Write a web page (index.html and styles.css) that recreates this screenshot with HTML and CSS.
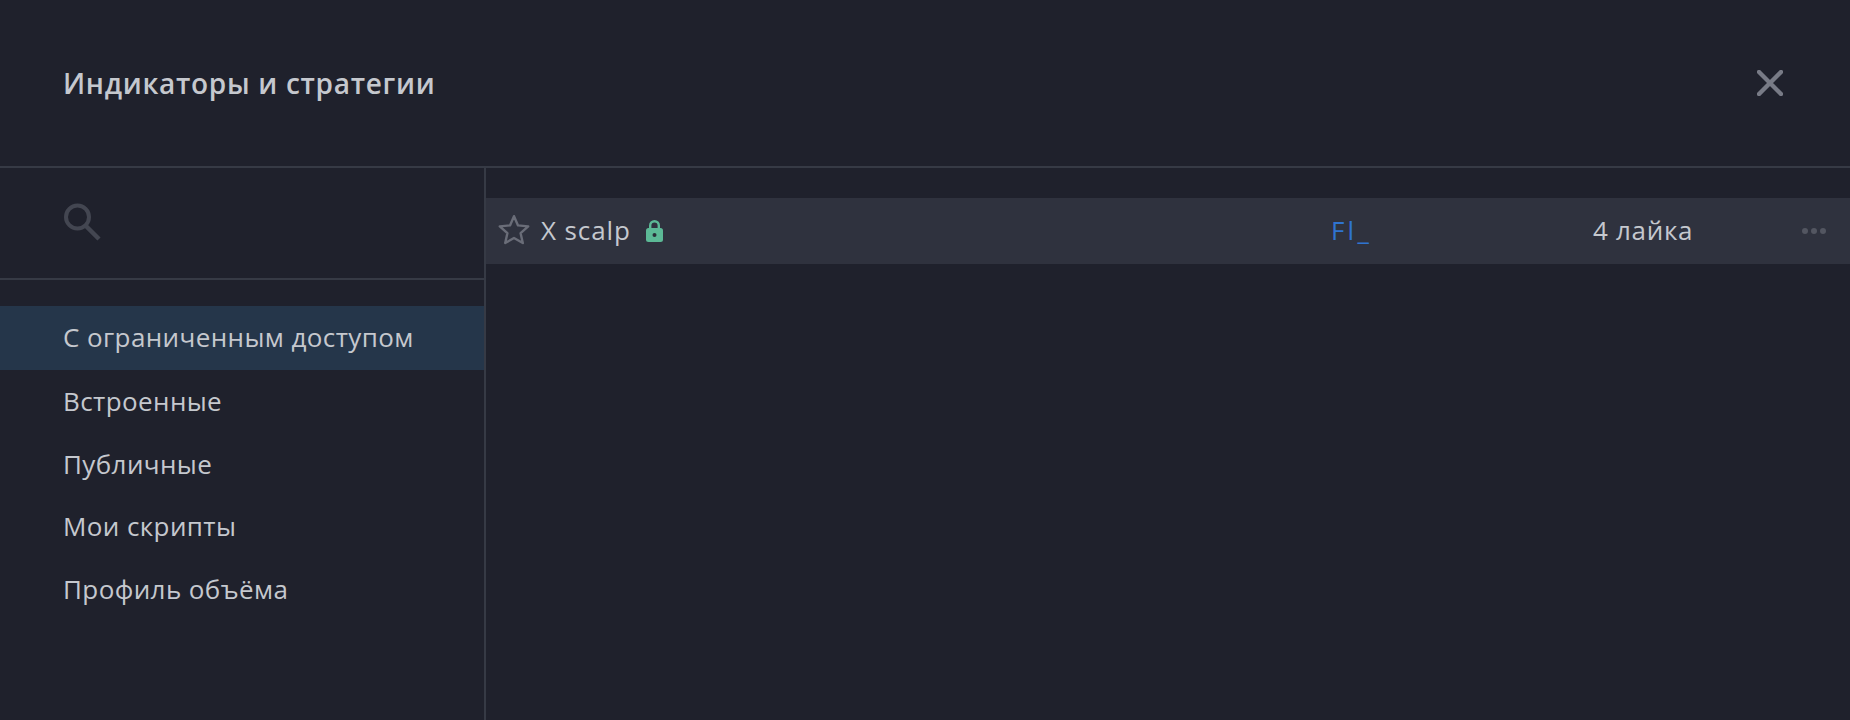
FILE: index.html
```html
<!DOCTYPE html>
<html lang="ru">
<head>
<meta charset="utf-8">
<title>Индикаторы и стратегии</title>
<link rel="stylesheet" href="styles.css">
</head>
<body>
<div class="dialog">
  <header class="head">
    <h1 class="title">Индикаторы и стратегии</h1>
    <svg class="close" width="26" height="26" viewBox="0 0 26 26"><path d="M2 2L24 24M24 2L2 24" stroke="#787b86" stroke-width="4.4" stroke-linecap="square" fill="none"/></svg>
  </header>
  <div class="body">
    <aside class="side">
      <div class="search">
        <svg width="37" height="38" viewBox="0 0 37 38"><circle cx="13.5" cy="14" r="11.5" stroke="#434651" stroke-width="4" fill="none"/><path d="M22 23L35 36" stroke="#434651" stroke-width="4.5" fill="none"/></svg>
      </div>
      <nav class="nav">
        <div class="item active">С ограниченным доступом</div>
        <div class="item">Встроенные</div>
        <div class="item">Публичные</div>
        <div class="item">Мои скрипты</div>
        <div class="item">Профиль объёма</div>
      </nav>
    </aside>
    <main class="list">
      <div class="row">
        <div class="cell-name">
          <svg class="star" width="32" height="31" viewBox="0 0 32 31"><path d="M16 2.2L20 11.4L30.2 12.4L22.6 19.2L24.8 29L16 24L7.2 29L9.4 19.2L1.8 12.4L12 11.4Z" stroke="#6a6d78" stroke-width="2.4" stroke-linejoin="round" fill="none"/></svg>
          <span class="name">X scalp</span>
          <svg class="lock" width="17" height="22" viewBox="0 0 17 22"><path d="M4.2 9V5.5a4.3 4.3 0 0 1 8.6 0V9" stroke="#5cb996" stroke-width="2.4" fill="none"/><rect x="0" y="8" width="17" height="14" rx="2.5" fill="#5cb996"/><circle cx="8.5" cy="15" r="2" fill="#2a2e39"/></svg>
        </div>
        <span class="author">Fl_</span>
        <span class="likes">4 лайка</span>
        <span class="dots"><i></i><i></i><i></i></span>
      </div>
    </main>
  </div>
</div>
</body>
</html>
```
FILE: styles.css
```css
* { box-sizing: border-box; }
html, body { margin: 0; height: 100%; }
body {
  background: #1f212c;
  color: #c5c8ce;
  font-family: "Open Sans", "DejaVu Sans", sans-serif;
  overflow: hidden;
}
.dialog { display: flex; flex-direction: column; height: 720px; }
.head {
  height: 168px;
  padding: 0 67px 0 63px;
  display: flex;
  align-items: center;
  justify-content: space-between;
  border-bottom: 2px solid #363a45;
}
.title { margin: 0; font-size: 28px; font-weight: 600; letter-spacing: 0.7px; color: #c5c8ce; }
.close { display: block; }
.body { flex: 1; display: flex; min-height: 0; }
.side { width: 486px; flex: none; border-right: 2px solid #363a45; }
.search {
  height: 112px;
  padding: 35px 0 0 64px;
  border-bottom: 2px solid #363a45;
}
.search svg { display: block; }
.nav { padding-top: 26px; display: flex; flex-direction: column; }
.item {
  height: 62.6px;
  padding-left: 63px;
  font-size: 26px;
  letter-spacing: 0.4px;
  line-height: 62px;
  white-space: nowrap;
}
.item.active { background: #25364a; height: 64px; line-height: 63px; }
.list { flex: 1; padding-top: 30px; min-width: 0; }
.row {
  height: 66px;
  background: #2f323e;
  display: grid;
  grid-template-columns: 845px 262px 209px auto;
  align-items: center;
  font-size: 26px;
  line-height: 62px;
  padding-bottom: 3px;
}
.cell-name { display: flex; align-items: center; padding-left: 12px; }
.star { flex: none; }
.name { margin-left: 11px; letter-spacing: 0.9px; }
.lock { margin-left: 15px; flex: none; margin-top: 2px; }
.author { letter-spacing: 3.2px; color: #2f74d0; }
.likes { letter-spacing: 0.7px; }
.dots { display: flex; gap: 3px; margin-top: 3px; }
.dots i { width: 6px; height: 6px; border-radius: 50%; background: #535661; }
```
